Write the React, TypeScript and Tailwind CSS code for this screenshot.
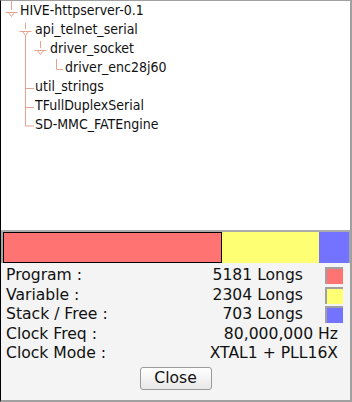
import React from "react";

const tree = [
  { name: "HIVE-httpserver-0.1", indent: 20 },
  { name: "api_telnet_serial", indent: 35 },
  { name: "driver_socket", indent: 50 },
  { name: "driver_enc28j60", indent: 65 },
  { name: "util_strings", indent: 35 },
  { name: "TFullDuplexSerial", indent: 35 },
  { name: "SD-MMC_FATEngine", indent: 35 },
];

const usage = [
  { label: "Program :", value: "5181 Longs", color: "bg-[#ff7373]" },
  { label: "Variable :", value: "2304 Longs", color: "bg-[#ffff73]" },
  { label: "Stack / Free :", value: "703 Longs", color: "bg-[#7373ff]" },
];

// expanded node marker: bar with a small V hanging under it
const Expander = ({ x, y }: { x: number; y: number }) => (
  <>
    <line x1={x - 6} y1={y} x2={x + 6} y2={y} />
    <polyline points={`${x - 3},${y} ${x},${y + 4} ${x + 3},${y}`} fill="none" />
  </>
);

const TreeLines = () => (
  <svg className="absolute left-0 top-0" width="120" height="140" stroke="#e8a390" strokeWidth="1">
    <line x1="10.5" y1="0" x2="10.5" y2="9" />
    <Expander x={10.5} y={11.5} />
    <line x1="24.5" y1="22" x2="24.5" y2="28" />
    <Expander x={24.5} y={30.5} />
    <line x1="24.5" y1="34" x2="24.5" y2="125" />
    <line x1="39.5" y1="40" x2="39.5" y2="47" />
    <Expander x={39.5} y={49.5} />
    <line x1="55.5" y1="58" x2="55.5" y2="68.5" />
    <line x1="55.5" y1="68.5" x2="62" y2="68.5" />
    <line x1="24.5" y1="87.5" x2="33" y2="87.5" />
    <line x1="24.5" y1="106.5" x2="33" y2="106.5" />
    <line x1="24.5" y1="125" x2="33" y2="125" />
  </svg>
);

const App = () => {
  return (
    <div className="w-[352px] h-[402px] flex flex-col bg-white text-[#111] font-['DejaVu_Sans',sans-serif] border-l border-l-black border-t border-t-[#a0a0a0] border-r-2 border-r-[#a0a0a0] border-b-2 border-b-[#a0a0a0]">
      {/* project tree */}
      <div className="relative h-[229px] bg-white text-[14px] font-['DejaVu_Sans_Condensed','DejaVu_Sans',sans-serif] font-stretch-condensed">
        <TreeLines />
        {tree.map((t) => (
          <div key={t.name} className="h-[19px] leading-[19px]" style={{ paddingLeft: t.indent - 1 }}>
            {t.name}
          </div>
        ))}
      </div>

      <div className="h-[2px] bg-[#ababab]" />

      {/* memory usage */}
      <div className="flex-1 flex flex-col bg-[#f4f4f4] text-[15.6px]">
        <div className="flex h-[31px] bg-[#a8a8a8] pl-[2px] pr-[1px]">
          <div className="w-[219px] bg-[#ff7373] border border-black" />
          <div className="w-[97px] bg-[#ffff73]" />
          <div className="flex-1 bg-[#7373ff]" />
        </div>

        <div className="flex flex-col pl-[5px] pr-[7px] pt-[3px]">
          {usage.map((u) => (
            <div key={u.label} className="flex items-center h-[19.5px]">
              <span className="flex-1">{u.label}</span>
              <span>{u.value}</span>
              <span className={`ml-[22px] w-[18px] h-[17px] border-l-2 border-t-2 border-[#a0a0a0] ${u.color}`} />
            </div>
          ))}
          <div className="flex items-center h-[19.5px]">
            <span className="flex-1">Clock Freq :</span>
            <span className="mr-[5px]">80,000,000 Hz</span>
          </div>
          <div className="flex items-center h-[20px]">
            <span className="flex-1">Clock Mode :</span>
            <span className="mr-[5px]">XTAL1 + PLL16X</span>
          </div>
        </div>

        <div className="flex justify-center pt-[3px]">
          <button className="w-[72px] h-[23px] rounded-[3px] border border-[#9a9a9a] bg-gradient-to-b from-white to-[#e8e8e8] leading-none">
            Close
          </button>
        </div>
      </div>
    </div>
  );
};

export default App;
